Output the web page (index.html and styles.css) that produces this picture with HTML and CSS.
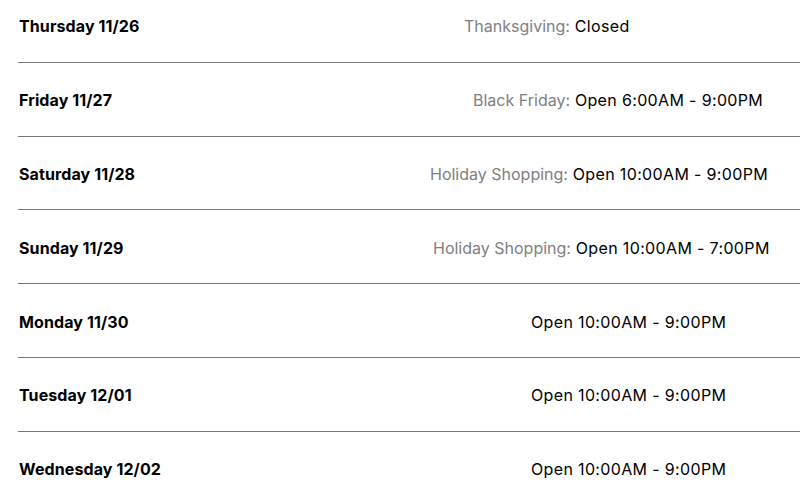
FILE: index.html
```html
<!DOCTYPE html>
<html>
<head>
<meta charset="utf-8">
<link rel="stylesheet" href="styles.css">
</head>
<body>
<div class="hours">
  <div class="row">
    <div class="day">Thursday 11/26</div>
    <div class="time t-thanks"><span class="label">Thanksgiving:</span> Closed</div>
  </div>
  <div class="row">
    <div class="day">Friday 11/27</div>
    <div class="time t-black"><span class="label">Black Friday:</span> Open 6:00AM - 9:00PM</div>
  </div>
  <div class="row">
    <div class="day">Saturday 11/28</div>
    <div class="time t-sat"><span class="label">Holiday Shopping:</span> Open 10:00AM - 9:00PM</div>
  </div>
  <div class="row">
    <div class="day">Sunday 11/29</div>
    <div class="time t-sun"><span class="label">Holiday Shopping:</span> Open 10:00AM - 7:00PM</div>
  </div>
  <div class="row">
    <div class="day">Monday 11/30</div>
    <div class="time t-reg">Open 10:00AM - 9:00PM</div>
  </div>
  <div class="row">
    <div class="day">Tuesday 12/01</div>
    <div class="time t-reg">Open 10:00AM - 9:00PM</div>
  </div>
  <div class="row">
    <div class="day">Wednesday 12/02</div>
    <div class="time t-reg">Open 10:00AM - 9:00PM</div>
  </div>
</div>
</body>
</html>
```
FILE: styles.css
```css
html, body {
  margin: 0;
  padding: 0;
  background: #fff;
  overflow: hidden;
  width: 800px;
  height: 500px;
}
body {
  font-family: Inter, "Liberation Sans", sans-serif;
  font-size: 16px;
  color: #000;
}
.hours {
  margin-top: -11px;
  margin-left: 18px;
  width: 800px;
}
.row {
  display: flex;
  align-items: center;
  height: 73.8px;
  padding-top: 2px;
  box-sizing: border-box;
  border-bottom: 1px solid #777;
}
.day {
  width: 240px;
  padding-left: 1px;
  font-weight: 700;
  letter-spacing: 0.1px;
}
.time {
  white-space: nowrap;
  letter-spacing: 0.35px;
}
.label {
  color: #808080;
  letter-spacing: 0;
}
.t-thanks { margin-left: 205px; }
.t-black { margin-left: 214px; }
.t-sat { margin-left: 171px; }
.t-sun { margin-left: 174px; }
.t-reg { margin-left: 272px; }
```
